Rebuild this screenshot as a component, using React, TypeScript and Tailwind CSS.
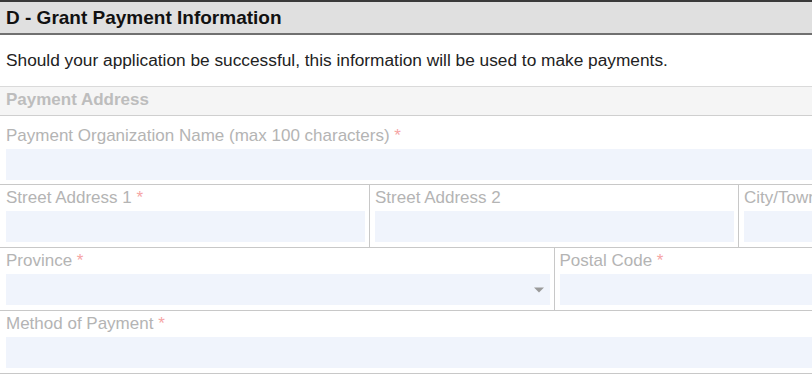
import React from "react";

interface FieldProps {
  label: string;
  required?: boolean;
  select?: boolean;
  first?: boolean;
  top?: string;
}

function Field({ label, required, select, first, top = "pt-[3px] pb-[5px]" }: FieldProps) {
  return (
    <div
      className={`${top} pr-[4px] min-w-0 ${
        first ? "pl-[6px]" : "pl-[5px] border-l border-[#c8c8c8]"
      }`}
    >
      <div className="h-[20px] leading-[20px] text-[17px] text-[#b4b4b4] whitespace-nowrap overflow-hidden">
        {label}
        {required && <span className="text-[#f6a5a5]"> *</span>}
      </div>
      <div className="relative mt-[3px] h-[31px] bg-[#f0f4fc]">
        {select && (
          <span className="absolute right-[6px] top-1/2 -translate-y-1/2 w-0 h-0 border-l-[5px] border-r-[5px] border-t-[5px] border-l-transparent border-r-transparent border-t-[#9a9a9a]" />
        )}
      </div>
    </div>
  );
}

export default function App() {
  return (
    <div className="w-full overflow-hidden bg-white font-['Liberation_Sans',Arial,sans-serif]">
      <div className="w-[1107px]">
        {/* Section header */}
        <div className="border-t-2 border-b-2 border-t-[#3a3a3a] border-b-[#707070] bg-[#e0e0e0] pt-[5px] pb-[4px] pl-[6px]">
          <h2 className="text-[19px] leading-[22px] font-bold text-[#111]">
            D - Grant Payment Information
          </h2>
        </div>

        <p className="pt-[15px] pb-[16px] pl-[6px] text-[17.3px] leading-[20px] text-[#222]">
          Should your application be successful, this information will be used to make payments.
        </p>

        {/* Sub header */}
        <div className="border-t border-b border-t-[#dadada] border-b-[#cfcfcf] bg-[#f5f5f5] pt-[3px] pb-[5px] pl-[6px]">
          <h3 className="text-[17px] leading-[20px] font-bold text-[#bdbdbd]">Payment Address</h3>
        </div>

        <div className="grid grid-cols-1 border-b border-[#c8c8c8]">
          <Field
            label="Payment Organization Name (max 100 characters)"
            required
            first
            top="pt-[10px] pb-[4px]"
          />
        </div>

        <div className="grid grid-cols-3 border-b border-[#c8c8c8]">
          <Field label="Street Address 1" required first />
          <Field label="Street Address 2" />
          <Field label="City/Town" required />
        </div>

        <div className="grid grid-cols-2 border-b border-[#c8c8c8]">
          <Field label="Province" required select first />
          <Field label="Postal Code" required />
        </div>

        <div className="grid grid-cols-1 border-b border-[#c8c8c8]">
          <Field label="Method of Payment" required first />
        </div>
      </div>
    </div>
  );
}
